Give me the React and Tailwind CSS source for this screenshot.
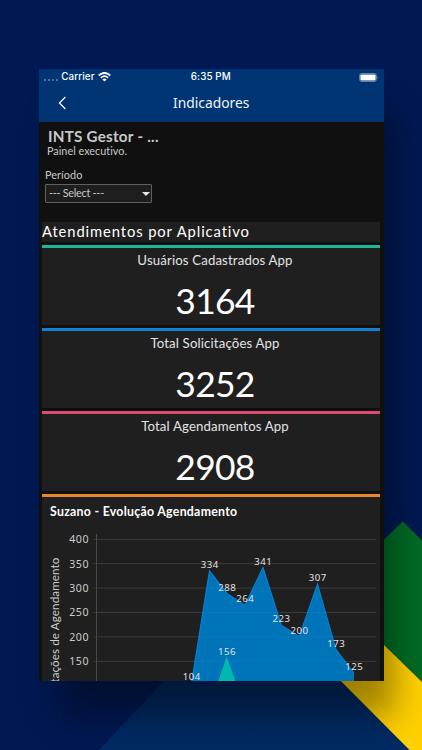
const metrics = [
  { label: "Usuários Cadastrados App", value: 3164, bar: "bg-[#22b499]" },
  { label: "Total Solicitações App", value: 3252, bar: "bg-[#1582d1]" },
  { label: "Total Agendamentos App", value: 2908, bar: "bg-[#e04c70]" },
];

const ticks = [400, 350, 300, 250, 200, 150];

const points = [
  { x: 191.5, value: 104 },
  { x: 209.5, value: 334 },
  { x: 227, value: 288 },
  { x: 245, value: 264 },
  { x: 263, value: 341 },
  { x: 281.3, value: 223 },
  { x: 299.3, value: 200 },
  { x: 317.5, value: 307 },
  { x: 336, value: 173 },
  { x: 354, value: 125 },
];

const yFor = (value) => 539.3 + (400 - value) * 0.488;

function Background() {
  return (
    <svg className="absolute inset-0" width="422" height="750" viewBox="0 0 422 750">
      <defs>
        <linearGradient id="navy" x1="0" y1="0" x2="0" y2="1">
          <stop offset="0" stopColor="#00275c" />
          <stop offset="1" stopColor="#002a63" />
        </linearGradient>
      </defs>
      <polygon points="250,590 99,750 410,750" fill="url(#navy)" />
      <polygon points="402.7,521.5 340,582 340,602 422,682 422,540.5" fill="#006b24" />
      <polygon points="340,602 422,682 422,750 409.5,750 300,640" fill="#ffd000" />
    </svg>
  );
}

function StatusBar() {
  return (
    <div className="grid grid-cols-3 items-center h-[17px] pl-[5px] pr-[5px] font-['Inter'] text-[9.8px] font-medium text-white">
      <div className="flex items-center whitespace-nowrap">
        <span className="flex gap-[1.9px] mt-[5px] mr-[3.5px]">
          <i className="size-[2px] rounded-full bg-[#5f86b5]" />
          <i className="size-[2px] rounded-full bg-[#5f86b5]" />
          <i className="size-[2px] rounded-full bg-[#5f86b5]" />
          <i className="size-[2px] rounded-full bg-[#5f86b5]" />
        </span>
        <span className="tracking-[0.12px]">Carrier</span>
        <svg className="ml-[3px] -mt-px" width="13" height="10" viewBox="0 0 13 10" fill="none" stroke="white">
          <path d="M0.8 3.5 Q6.5 -1.7 12.2 3.5" strokeWidth="1.9" />
          <path d="M2.9 5.8 Q6.5 2.6 10.1 5.8" strokeWidth="1.7" />
          <path d="M4.4 7.4 Q6.5 5.6 8.6 7.4 L6.5 9.5Z" fill="white" stroke="none" />
        </svg>
      </div>
      <span className="text-center tracking-[0.1px] -ml-px">6:35 PM</span>
      <svg className="justify-self-end -mt-px" width="20" height="9" viewBox="0 0 20 9">
        <rect x="0.5" y="0.5" width="17" height="8" rx="2.2" fill="none" stroke="#7795bc" strokeWidth="0.8" />
        <rect x="1.4" y="1.4" width="15.2" height="6.2" rx="1" fill="white" />
        <path d="M18.7 3 Q20 4.5 18.7 6Z" fill="#7795bc" />
      </svg>
    </div>
  );
}

function Header() {
  return (
    <header className="h-[53px] bg-[#003473]">
      <StatusBar />
      <div className="grid grid-cols-[1fr_auto_1fr] items-center h-9">
        <svg className="ml-[19px] -mt-[3px]" width="9" height="14" viewBox="0 0 9 14" fill="none" stroke="white" strokeWidth="1.2">
          <path d="M7.4 1 L1.4 7 L7.4 13" />
        </svg>
        <h1 className="-mt-px font-['Noto_Sans'] text-[13.8px] text-[#f0f4fa]">Indicadores</h1>
      </div>
    </header>
  );
}

function Filters() {
  return (
    <section className="h-[100px] pt-[5px] pl-[6px] text-[#c9c9c9]">
      <h2 className="pl-[3px] text-[15.2px] leading-[18px] font-bold tracking-[0.25px]">INTS Gestor - ...</h2>
      <p className="pl-[2px] text-[10.8px] leading-[11px] tracking-[0.03px]">Painel executivo.</p>
      <p className="mt-[12px] text-[10.9px] leading-[14px] tracking-[0.05px]">Período</p>
      <div className="flex items-center justify-between w-[107px] h-[19px] mt-[2px] pl-[3px] pr-[1px] border border-[#606060] rounded-[1px] bg-[#1e1e1e] text-[10.8px] tracking-[-0.25px]">
        <span className="-mt-px">--- Select ---</span>
        <svg width="8" height="4" viewBox="0 0 8 4">
          <path d="M0 0H8L4 4Z" fill="#e6e6e6" />
        </svg>
      </div>
    </section>
  );
}

function Metric({ label, value, bar }) {
  return (
    <div className="h-[83.2px]">
      <div className={`h-[3px] ${bar}`} />
      <div className="h-[77.5px] pt-[3px] bg-[#1f1f1f] text-center pl-2">
        <p className="text-[13.2px] leading-[18px] tracking-[0.15px] text-[#e4e4e4]">{label}</p>
        <p className="mt-[12px] text-[35.4px] leading-[40px] tracking-[-0.7px] text-white">{value}</p>
      </div>
    </div>
  );
}

function Chart() {
  const line = points.map((p) => `${p.x},${yFor(p.value) - 0.5}`).join(" ");
  return (
    <div>
      <div className="h-[2.5px] bg-[#ea872d]" />
      <div className="bg-[#1f1f1f]">
        <h3 className="h-7 pt-[6px] pl-2 text-[12.3px] leading-[18px] font-bold tracking-[0.29px] text-white">
          Suzano - Evolução Agendamento
        </h3>
        <svg className="block" width="338" height="158" viewBox="42 525 338 158">
          {ticks.map((t) => (
            <g key={t}>
              <path d={`M93 ${yFor(t)}H376.5`} stroke="#353535" />
              <text x="88.5" y={yFor(t) + 3.8} textAnchor="end" textLength="19.3" className="font-['Noto_Sans'] text-[10.6px] fill-[#cccccc]">
                {t}
              </text>
            </g>
          ))}
          <path d="M96.5 534V690" stroke="#4a4a4a" />
          <polygon points={`185,710 ${line} 354,710`} fill="#0074b8" />
          <polyline points={`186.5,745 ${line}`} fill="none" stroke="#087fd5" strokeWidth="1.2" />
          <polygon points="209,708 226.7,656.5 245,708" fill="#00b8ae" />
          {ticks.map((t) => (
            <path key={t} d={`M97 ${yFor(t)}H376.5`} stroke="white" strokeOpacity="0.04" />
          ))}
          {[...points, { x: 226.7, value: 156 }].map((p) => (
            <text key={p.value} x={p.x} y={yFor(p.value) - 3.3} textAnchor="middle" textLength="17.4" className="font-['Noto_Sans'] text-[9.6px] fill-[#e2e2e2]">
              {p.value}
            </text>
          ))}
          <text transform="translate(58.5 557.5) rotate(-90)" textAnchor="end" className="text-[11.6px] tracking-[0.12px] fill-[#cccccc]">
            Solicitações de Agendamento
          </text>
        </svg>
      </div>
    </div>
  );
}

export default function App() {
  return (
    <div className="relative w-[422px] h-[750px] overflow-hidden bg-[#001952] pt-[69px] pl-[39px]">
      <Background />
      <main className="relative w-[344.5px] h-[612px] bg-[#101010] font-['Lato',sans-serif] shadow-[15px_40px_32px_-5px_rgba(0,0,0,0.38)]">
        <div className="h-full overflow-hidden">
          <Header />
          <Filters />
          <div className="w-[338px] ml-[3px]">
            <h2 className="h-[19.5px] mb-[3px] bg-[#1f1f1f] text-[14.8px] leading-[18.5px] tracking-[0.88px] text-white">
              Atendimentos por Aplicativo
            </h2>
            {metrics.map((m) => (
              <Metric key={m.label} {...m} />
            ))}
            <Chart />
          </div>
        </div>
      </main>
    </div>
  );
}
